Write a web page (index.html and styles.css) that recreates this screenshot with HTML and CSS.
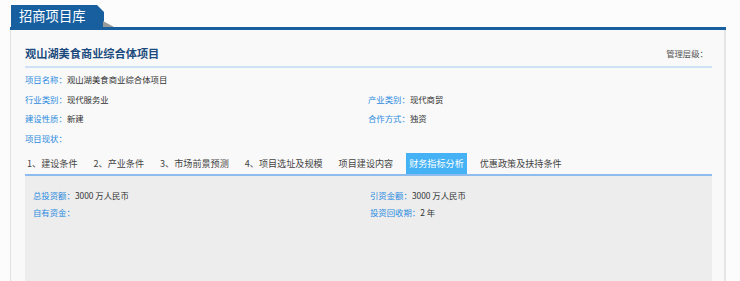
FILE: index.html
```html
<!DOCTYPE html>
<html lang="zh-CN">
<head>
  <meta charset="UTF-8" />
  <title>招商项目库</title>
  <link rel="stylesheet" href="styles.css">
</head>
<body>

<div class="page">
  <!-- HEADER -->
  <div class="head">
    <div class="head-tab">招商项目库</div>
  </div>

  <div class="box">
    <div class="title-row">
      <h1 class="title">观山湖美食商业综合体项目</h1>
      <span class="level">管理层级：</span>
    </div>

    <div class="info">
      <p class="row full"><span class="lbl">项目名称：</span>观山湖美食商业综合体项目</p>
      <p class="row"><span class="lbl">行业类别：</span>现代服务业</p>
      <p class="row"><span class="lbl">产业类别：</span>现代商贸</p>
      <p class="row"><span class="lbl">建设性质：</span>新建</p>
      <p class="row"><span class="lbl">合作方式：</span>独资</p>
      <p class="row full"><span class="lbl">项目现状：</span></p>
    </div>

    <!-- TABS -->
    <ul class="tabs">
      <li>1、建设条件</li>
      <li>2、产业条件</li>
      <li>3、市场前景预测</li>
      <li>4、项目选址及规模</li>
      <li>项目建设内容</li>
      <li class="active">财务指标分析</li>
      <li>优惠政策及扶持条件</li>
    </ul>

    <div class="panel">
      <p class="row"><span class="lbl">总投资额：</span>3000 万人民币</p>
      <p class="row"><span class="lbl">引资金额：</span>3000 万人民币</p>
      <p class="row"><span class="lbl">自有资金：</span></p>
      <p class="row"><span class="lbl">投资回收期：</span>2 年</p>
    </div>
  </div>
</div>

</body>
</html>
```

FILE: styles.css
```css
*{box-sizing:border-box}

body {
  margin:0;
  background:#fcfcfc;
  font-family:"Noto Sans CJK SC","Noto Sans",sans-serif;
  color:#333;
}

p,h1,ul {margin:0;padding:0}

.page {padding:5px 14px 0 10px}

/* header bar */
.head {
  position:relative;
  height:25px;
  border-bottom:3px solid #175f9f;
}

.head-tab {
  margin-left:1px;
  width:93px;
  height:22px;
  background:#175f9f;
  color:#fff;
  font-size:13.3px;
  line-height:22px;
  padding-left:8px;
  clip-path:polygon(0 0,86px 0,93px 7px,93px 100%,0 100%);
}

.head::after {
  content:'';
  position:absolute;
  left:93px;
  bottom:0;
  border-style:solid;
  border-width:6px 0 0 11px;
  border-color:transparent transparent transparent #9a9a9a;
}

/* main box */
.box {
  background:#f9f9f9;
  border-left:1px solid #e0e0e0;
  border-right:2px solid #e6e6e6;
  padding:0 12px 0 14px;
  min-height:260px;
}

.title-row {
  display:flex;
  justify-content:space-between;
  align-items:center;
  padding:13px 4px 3px 0;
  border-bottom:2px solid #cfe2f5;
}

.title {
  font-size:11.2px;
  font-weight:700;
  color:#1b4a7e;
  line-height:20px;
}

.level {font-size:8.4px;color:#555}

.info {
  display:grid;
  grid-template-columns:343px 1fr;
  padding-top:2px;
}

.row {font-size:8.4px;line-height:19.6px;color:#333}
.row.full {grid-column:1/-1}
.lbl {color:#2b8be0}

/* tabs */
.tabs {
  list-style:none;
  display:flex;
  gap:10px;
  margin:5px 0 0 -1px;
}

.tabs li {
  font-size:9.1px;
  line-height:21px;
  padding:0 3px;
  color:#444;
}

.tabs li.active {background:#45b2f5;color:#fff}

.panel {
  display:grid;
  grid-template-columns:337px 1fr;
  align-content:start;
  background:#ededed;
  border-top:2px solid #8dbdef;
  padding:11px 8px 0;
  min-height:120px;
}

.panel .row {line-height:17px}
```
